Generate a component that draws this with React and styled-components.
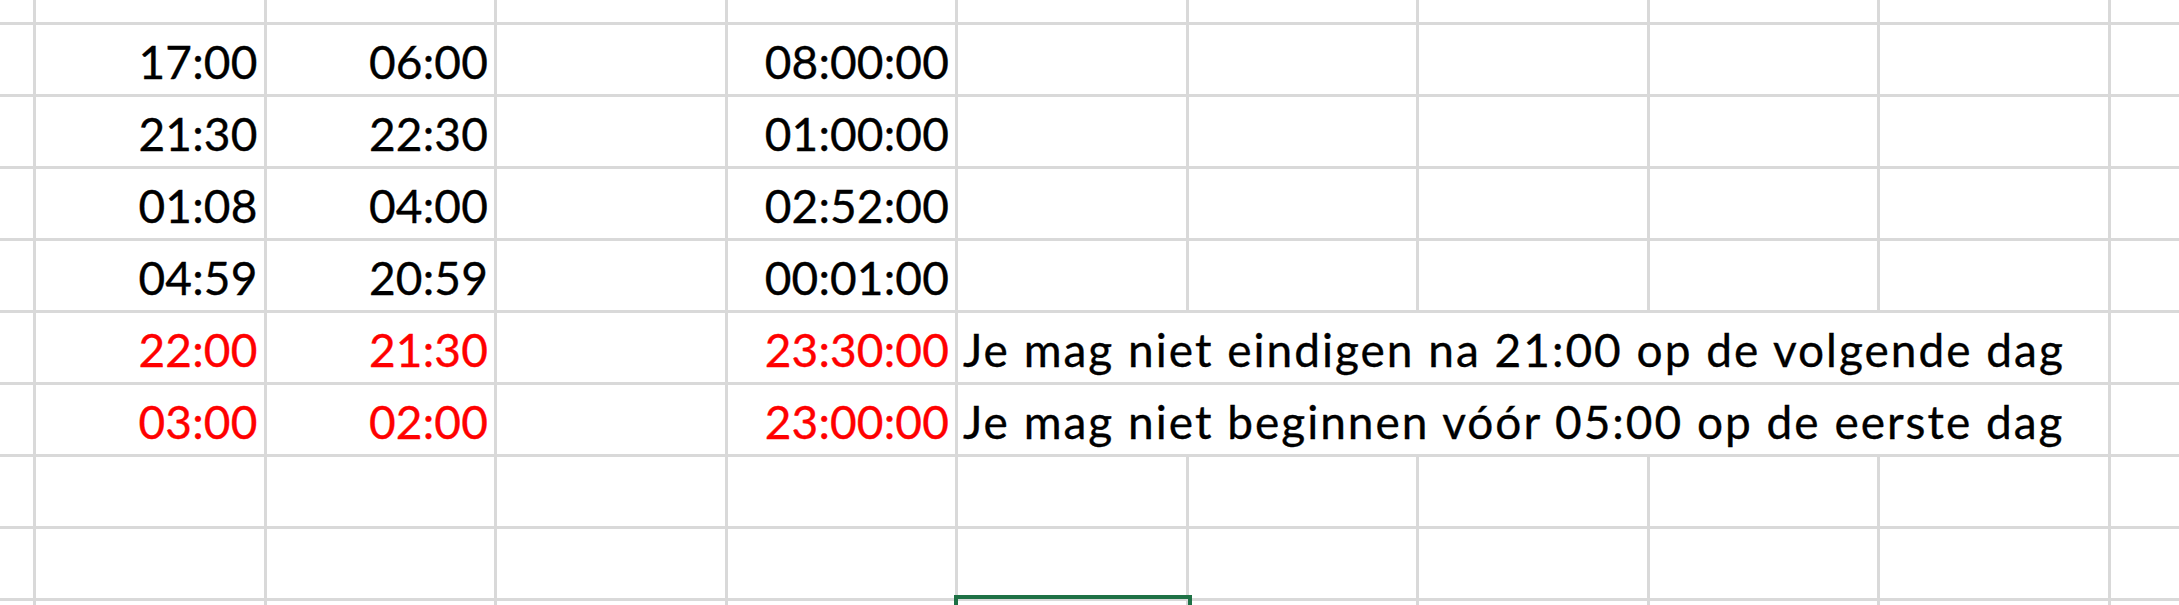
import React from "react";
import styled, { createGlobalStyle } from "styled-components";

const GlobalStyle = createGlobalStyle`
  html, body { margin: 0; padding: 0; background: #fff; }
  body { overflow: hidden; }
`;

const Sheet = styled.div`
  display: grid;
  grid-template-columns: 33px repeat(9, 227.5px) 1fr;
  grid-template-rows: 22px repeat(8, 69px) 1fr;
  gap: 3px;
  width: 2179px;
  height: 605px;
  background: #d9d9d9;
  overflow: hidden;
`;

const Cell = styled.div`
  display: flex;
  align-items: flex-end;
  justify-content: ${(p) => (p.$align === "left" ? "flex-start" : "flex-end")};
  padding: 0 6px 9px 5px;
  background: #fff;
  font-family: Lato, "Open Sans", sans-serif;
  font-size: 46px;
  line-height: 1;
  letter-spacing: ${(p) => (p.$align === "left" ? "2px" : "0.15px")};
  -webkit-text-stroke: 0.35px currentColor;
  white-space: nowrap;
  color: ${(p) => (p.$error ? "#ff0000" : "#000")};
  grid-column: span ${(p) => p.$span || 1};
  min-width: 0;
`;

const SelectedCell = styled(Cell)`
  position: relative;
  &::after {
    content: "";
    position: absolute;
    inset: -6px -6px -6px -4px;
    border: 4px solid #1e7145;
  }
`;

const rows = [
  { start: "17:00", end: "06:00", dur: "08:00:00" },
  { start: "21:30", end: "22:30", dur: "01:00:00" },
  { start: "01:08", end: "04:00", dur: "02:52:00" },
  { start: "04:59", end: "20:59", dur: "00:01:00" },
  {
    start: "22:00",
    end: "21:30",
    dur: "23:30:00",
    error: true,
    note: "Je mag niet eindigen na 21:00 op de volgende dag",
  },
  {
    start: "03:00",
    end: "02:00",
    dur: "23:00:00",
    error: true,
    note: "Je mag niet beginnen vóór 05:00 op de eerste dag",
  },
];

const COLS = 11;

const EmptyRow = ({ r }) =>
  Array.from({ length: COLS }, (_, c) => <Cell key={`${r}-${c}`} />);

const DataRow = ({ row, r }) => (
  <>
    <Cell />
    <Cell $error={row.error}>{row.start}</Cell>
    <Cell $error={row.error}>{row.end}</Cell>
    <Cell />
    <Cell $error={row.error}>{row.dur}</Cell>
    {row.note ? (
      <Cell $align="left" $span={5}>
        {row.note}
      </Cell>
    ) : (
      Array.from({ length: 5 }, (_, c) => <Cell key={`${r}-n${c}`} />)
    )}
    <Cell />
  </>
);

const SelectionRow = () =>
  Array.from({ length: COLS }, (_, c) =>
    c === 5 ? <SelectedCell key={`sel-${c}`} /> : <Cell key={`sel-${c}`} />
  );

export default function App() {
  return (
    <>
      <GlobalStyle />
      <Sheet>
        <EmptyRow r="top" />
        {rows.map((row, i) => (
          <DataRow key={i} row={row} r={i} />
        ))}
        <EmptyRow r="e1" />
        <EmptyRow r="e2" />
        <SelectionRow />
      </Sheet>
    </>
  );
}
